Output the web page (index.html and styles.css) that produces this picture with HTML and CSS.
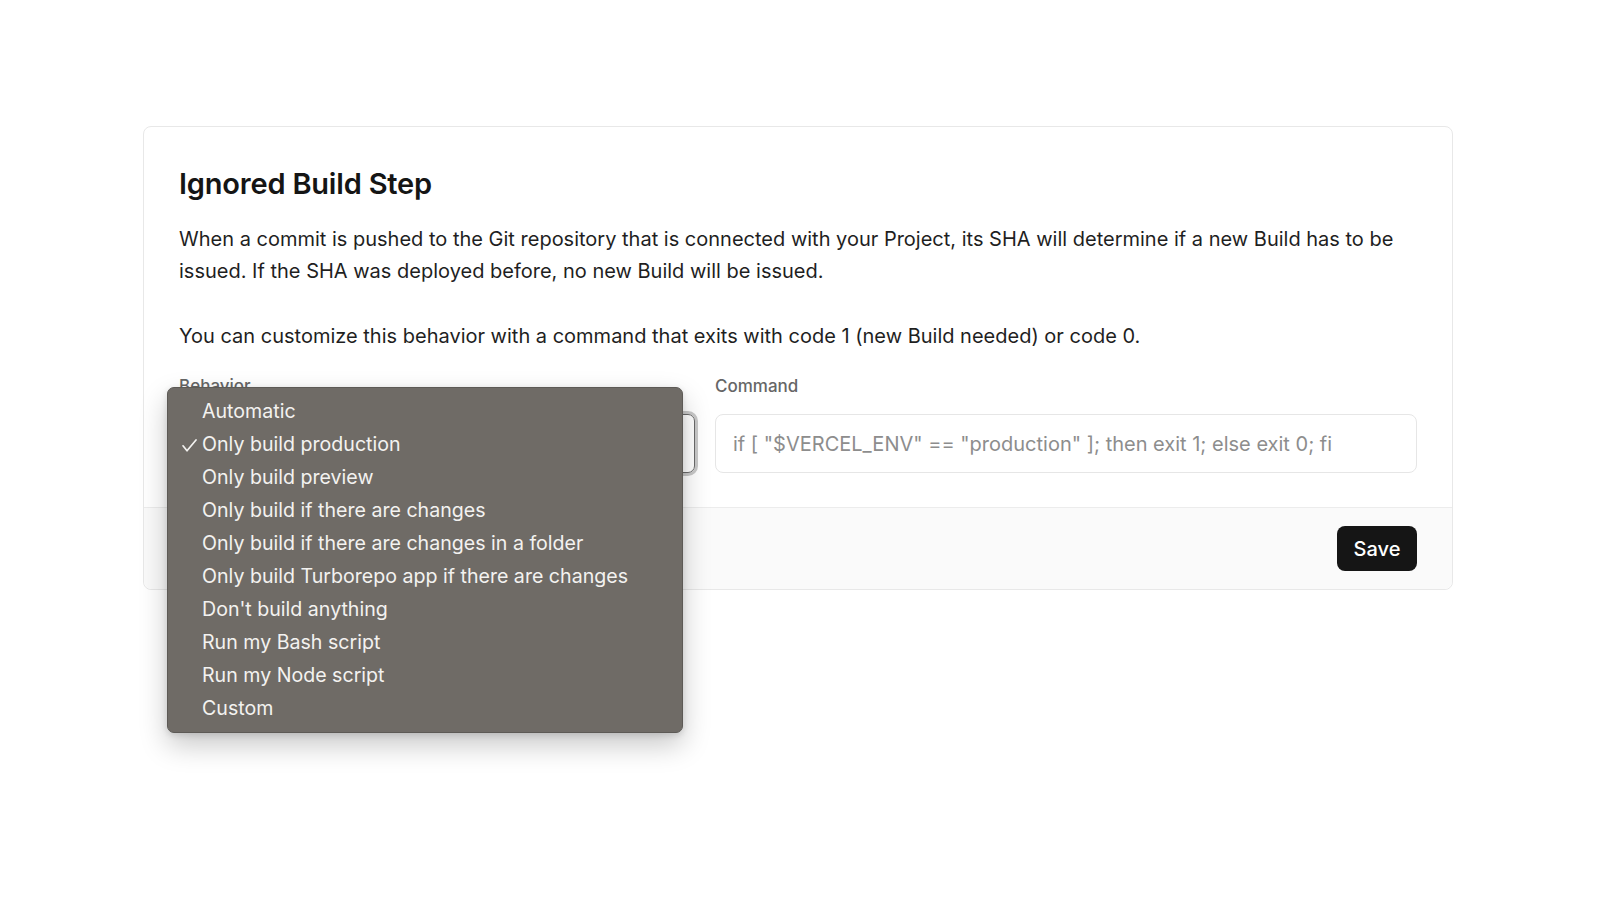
FILE: index.html
```html
<!DOCTYPE html>
<html lang="en">
<head>
<meta charset="utf-8">
<title>Ignored Build Step</title>
<link rel="stylesheet" href="styles.css">
</head>
<body>
<main class="page">
<section class="card">
  <div class="card-body">
    <h2 class="title">Ignored Build Step</h2>
    <p class="text">When a commit is pushed to the Git repository that is connected with your Project, its SHA will determine if a new Build has to be issued. If the SHA was deployed before, no new Build will be issued.</p>
    <p class="text">You can customize this behavior with a command that exits with code 1 (new Build needed) or code 0.</p>
    <div class="fields">
      <div class="field behavior">
        <label class="label">Behavior</label>
        <div class="select"></div>
        <ul class="menu">
          <li class="item">Automatic</li>
          <li class="item checked"><svg class="check" width="15" height="13" viewBox="0 0 15 13"><path d="M1 6.8 L5 11.8 L14 1" fill="none" stroke="#f3f2f0" stroke-width="1.7" stroke-linecap="round" stroke-linejoin="round"/></svg>Only build production</li>
          <li class="item">Only build preview</li>
          <li class="item">Only build if there are changes</li>
          <li class="item">Only build if there are changes in a folder</li>
          <li class="item">Only build Turborepo app if there are changes</li>
          <li class="item">Don't build anything</li>
          <li class="item">Run my Bash script</li>
          <li class="item">Run my Node script</li>
          <li class="item">Custom</li>
        </ul>
      </div>
      <div class="field">
        <label class="label">Command</label>
        <div class="input">if [ "$VERCEL_ENV" == "production" ]; then exit 1; else exit 0; fi</div>
      </div>
    </div>
  </div>
  <div class="card-footer">
    <button class="save">Save</button>
  </div>
</section>
</main>
</body>
</html>
```

FILE: styles.css
```css
* { box-sizing: border-box; }
html, body { margin: 0; padding: 0; background: #fff; overflow: visible; }
body {
  font-family: Inter, "Noto Sans", sans-serif;
  color: #1c1c1c;
  min-height: 900px;
}
.page {
  padding-top: 126px;
  padding-left: 143px;
}
.card {
  width: 1310px;
  border: 1px solid #e8e8e8;
  border-radius: 8px;
  background: #fff;
}
.card-body {
  padding: 39px 35px 34px 35px;
  position: relative;
  z-index: 2;
}
.title {
  margin: 0;
  font-size: 29px;
  line-height: 36px;
  font-weight: 600;
  color: #151515;
  letter-spacing: -0.2px;
}
.text {
  margin: 21px 0 0 0;
  font-size: 20px;
  line-height: 32px;
  color: #1f1f1f;
}
.text + .text { margin-top: 33px; }
.fields {
  display: grid;
  grid-template-columns: 516px 1fr;
  column-gap: 20px;
  margin-top: 22px;
}
.field { position: relative; display: flex; flex-direction: column; }
.label {
  font-size: 17px;
  line-height: 24px;
  color: #666;
  font-weight: 500;
}
.select {
  margin-top: 16px;
  height: 59px;
  border: 1px solid #6a6a6a;
  border-radius: 7px;
  box-shadow: 0 0 0 3px #c9c9c9;
}
.input {
  margin-top: 16px;
  height: 59px;
  border: 1px solid #e6e6e6;
  border-radius: 8px;
  padding: 0 17px;
  display: flex;
  align-items: center;
  font-size: 20px;
  color: #8d8d8d;
}
.menu {
  position: absolute;
  left: -12px;
  top: 13px;
  width: 516px;
  margin: 0;
  padding: 7px 0;
  list-style: none;
  background: #6f6b66;
  border: 1px solid #5d5a56;
  border-radius: 7px;
  box-shadow: 0 12px 28px rgba(0,0,0,0.22), 0 2px 6px rgba(0,0,0,0.12);
  z-index: 5;
}
.item {
  position: relative;
  height: 33px;
  line-height: 33px;
  padding-left: 34px;
  font-size: 19.6px;
  color: #f3f2f0;
  white-space: nowrap;
}
.check {
  position: absolute;
  left: 14px;
  top: 11px;
}
.card-footer {
  border-top: 1px solid #ececec;
  background: #fafafa;
  border-radius: 0 0 8px 8px;
  padding: 18px 35px;
  display: flex;
  justify-content: flex-end;
}
.save {
  width: 80px;
  height: 45px;
  border: 0;
  border-radius: 8px;
  background: #151515;
  color: #fff;
  font-family: Inter, sans-serif;
  font-size: 20px;
  font-weight: 500;
}
```
